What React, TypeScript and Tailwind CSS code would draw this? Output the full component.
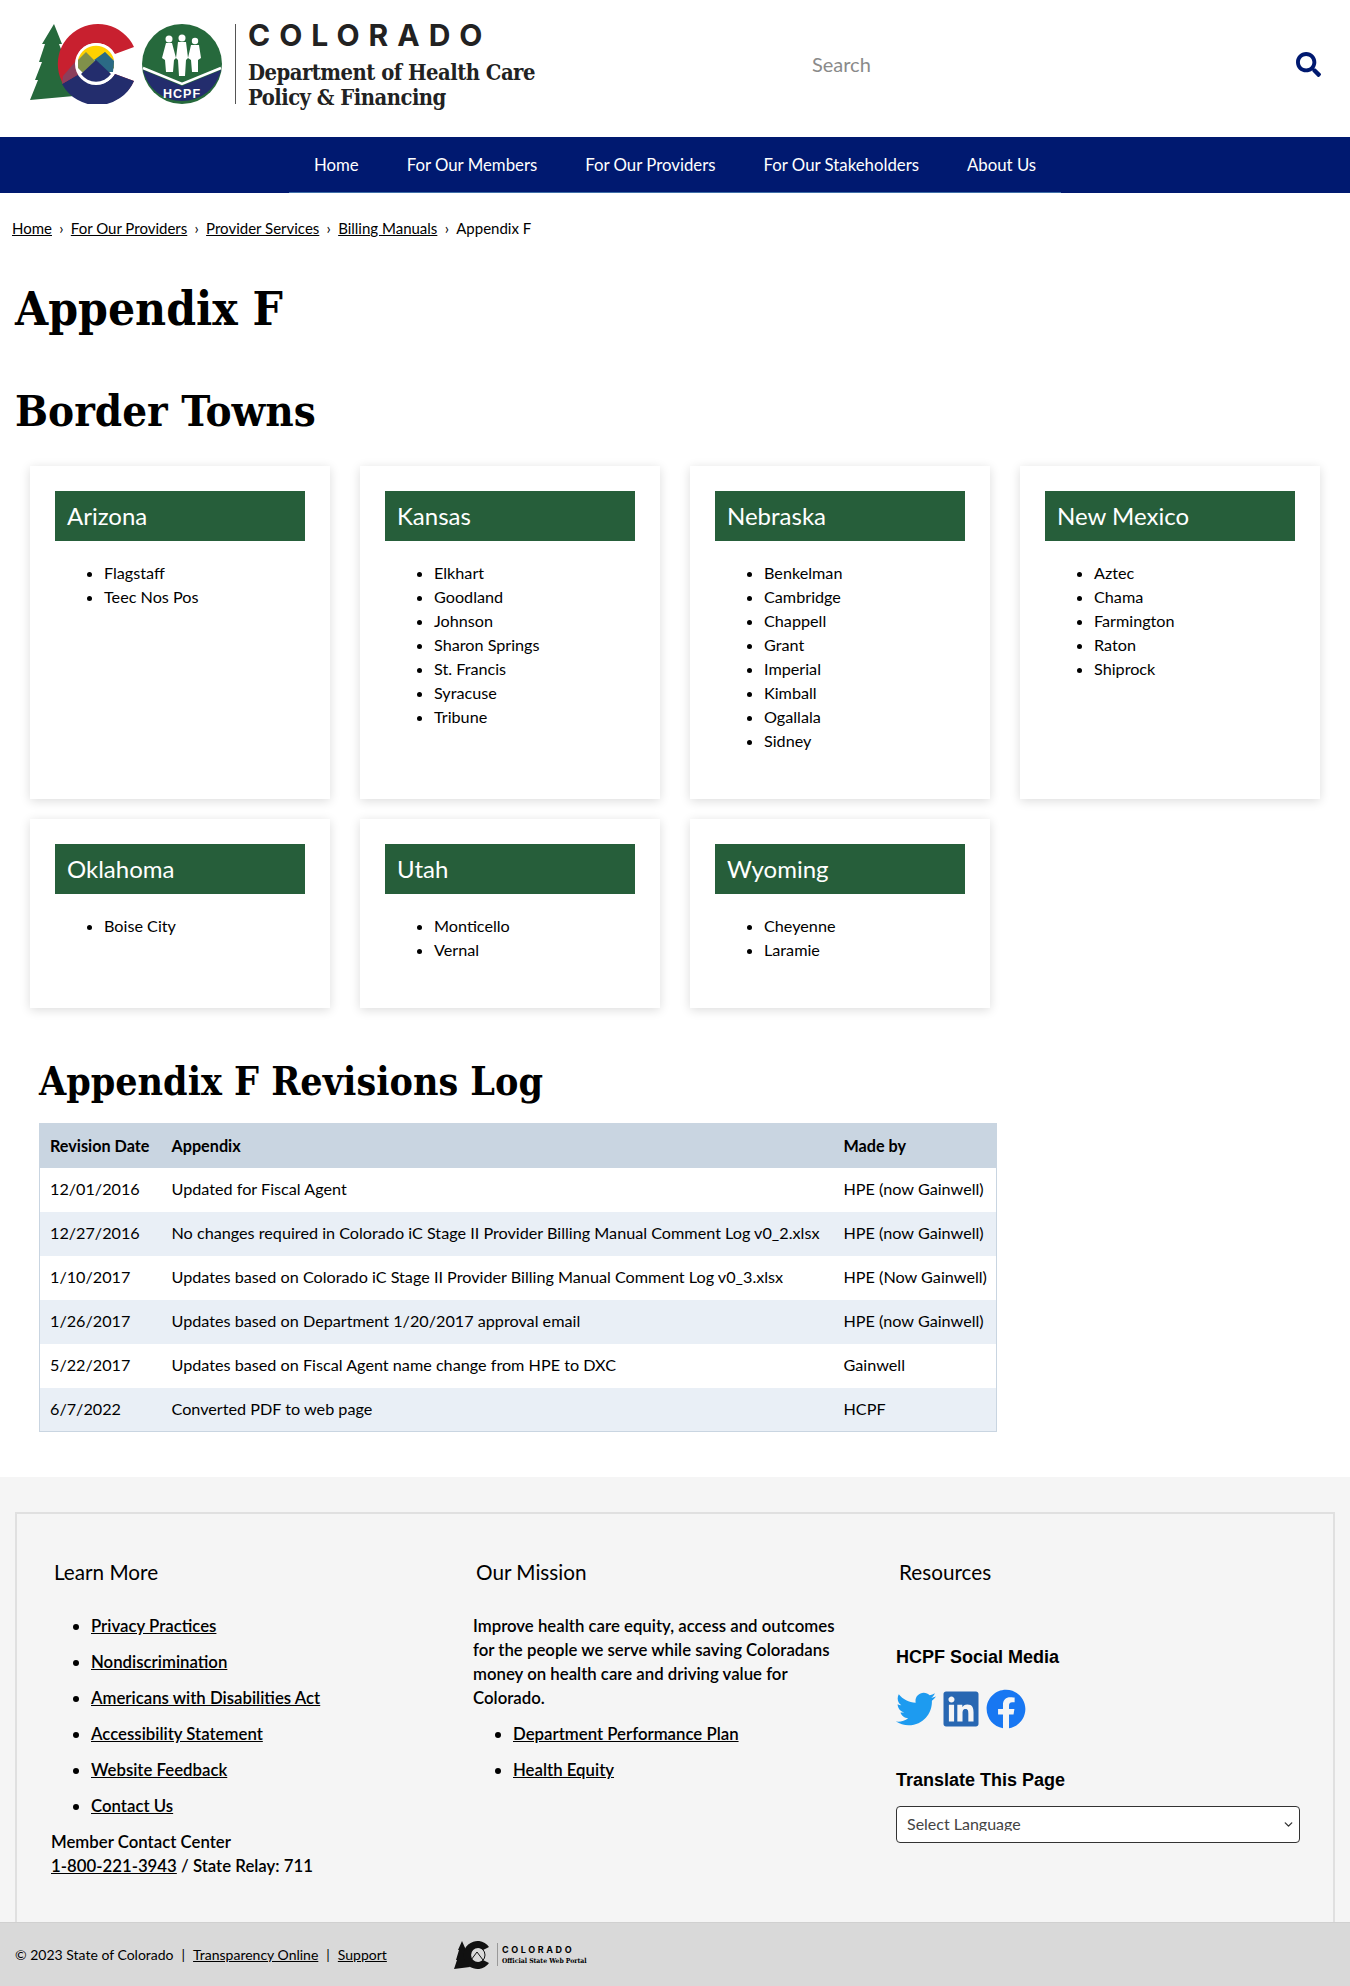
import { ChevronDown } from "lucide-react";
import { FaFacebook, FaLinkedin, FaSearch, FaTwitter } from "react-icons/fa";

const bodyFont = "font-['Lato',sans-serif]";
const slab = "font-['DejaVu_Serif',serif] [font-stretch:condensed]";

const states = [
  { name: "Arizona", towns: ["Flagstaff", "Teec Nos Pos"] },
  { name: "Kansas", towns: ["Elkhart", "Goodland", "Johnson", "Sharon Springs", "St. Francis", "Syracuse", "Tribune"] },
  { name: "Nebraska", towns: ["Benkelman", "Cambridge", "Chappell", "Grant", "Imperial", "Kimball", "Ogallala", "Sidney"] },
  { name: "New Mexico", towns: ["Aztec", "Chama", "Farmington", "Raton", "Shiprock"] },
  { name: "Oklahoma", towns: ["Boise City"] },
  { name: "Utah", towns: ["Monticello", "Vernal"] },
  { name: "Wyoming", towns: ["Cheyenne", "Laramie"] },
];

const revisions = [
  ["12/01/2016", "Updated for Fiscal Agent", "HPE (now Gainwell)"],
  ["12/27/2016", "No changes required in Colorado iC Stage II Provider Billing Manual Comment Log v0_2.xlsx", "HPE (now Gainwell)"],
  ["1/10/2017", "Updates based on Colorado iC Stage II Provider Billing Manual Comment Log v0_3.xlsx", "HPE (Now Gainwell)"],
  ["1/26/2017", "Updates based on Department 1/20/2017 approval email", "HPE (now Gainwell)"],
  ["5/22/2017", "Updates based on Fiscal Agent name change from HPE to DXC", "Gainwell"],
  ["6/7/2022", "Converted PDF to web page", "HCPF"],
];

function Logo() {
  return (
    <svg width="193" height="80" viewBox="0 0 193 80" className="shrink-0">
      {/* tree */}
      <path d="M24 0 L32 20 L29 20 L36 38 L32 38 L44 72 L0 76 L8 56 L5 56 L12 38 L9 38 L15 20 L12 20 Z" fill="#26693c" />
      {/* C */}
      <path d="M104 23 A40 40 0 1 0 104 57 L85 50 A21 21 0 1 1 85 30 Z" fill="#c8202f" />
      <path d="M104 57 A40 40 0 0 1 32 60 L49 50 A21 21 0 0 0 85 50 Z" fill="#232d6d" />
      <path d="M32 60 L49 50 L45 38 L33 52 Z" fill="#8b3f5c" />
      <circle cx="66" cy="40" r="21" fill="#fff" />
      <path d="M48 36 A18.5 18.5 0 0 1 84 36 Z" fill="#ffd100" />
      <path d="M48 44 L48 36 L56 28 L65 37 L75 28 L84 37 L84 44 L78 50 L54 50 Z" fill="#80904a" />
      <path d="M64 36 L75 28 L84 37 L83 48 L76 48 Z" fill="#2b6a85" />
      <path d="M51 50 L66 36 L81 50 A18.5 18.5 0 0 1 51 50 Z" fill="#232d6d" />
      {/* HCPF seal */}
      <circle cx="152" cy="40" r="40" fill="#26693c" />
      <path d="M113 46 L152 62 L191 46 A40 40 0 0 1 113 46 Z" fill="#232d6d" />
      <path d="M113 44 L152 60 L191 44" fill="none" stroke="#fff" strokeWidth="2.5" />
      <g fill="#fff">
        <circle cx="139" cy="15" r="3.5" />
        <path d="M136 19 L142 19 L146 34 L144 36 L143 48 L136 48 L135 36 L132 34 Z" />
        <circle cx="152" cy="14" r="3.5" />
        <path d="M148 18 L156 18 L158 34 L156 36 L155 52 L149 52 L148 36 L146 34 Z" />
        <circle cx="165" cy="17" r="3.2" />
        <path d="M161 21 L169 21 L171 34 L168 36 L168 48 L162 48 L161 36 L158 34 Z" />
      </g>
      <text x="152" y="74" textAnchor="middle" fill="#fff" fontSize="12.5" fontWeight="700" letterSpacing="1" fontFamily="Liberation Sans, sans-serif">HCPF</text>
    </svg>
  );
}

function SmallPortalLogo() {
  return (
    <svg width="36" height="30" viewBox="0 0 36 30" className="shrink-0">
      <path d="M8 1 L12 10 L11 10 L14 18 L13 18 L16 27 L0 29 L3 20 L2 20 L5 10 L4 10 Z" fill="#111" />
      <path d="M35 7 A14 14 0 1 0 35 23 L29 20 A7 7 0 1 1 29 10 Z" fill="#111" />
      <circle cx="23" cy="15" r="8" fill="none" stroke="#111" strokeWidth="1" />
      <path d="M17 20 L23 12 L29 20" fill="none" stroke="#111" strokeWidth="1" />
    </svg>
  );
}

function StateCard({ name, towns }: { name: string; towns: string[] }) {
  return (
    <div className="px-[15px]">
      <div className="h-full bg-white px-[25px] pb-[46px] pt-[25px] shadow-[0_2px_10px_rgba(0,0,0,0.14)]">
        <h3 className="bg-[#265e3a] px-3 text-[24px] leading-[50px] text-white">{name}</h3>
        <ul className="mt-5 list-disc pl-[49px] text-[16.2px] leading-[24px] text-black">
          {towns.map((t) => (
            <li key={t}>{t}</li>
          ))}
        </ul>
      </div>
    </div>
  );
}

export default function App() {
  return (
    <div className={`${bodyFont} bg-white text-black`}>
      <header className="flex h-[137px] items-center pb-[9px] pl-[30px] pr-[29px]">
        <Logo />
        <div className="ml-[12px] flex h-[80px] flex-col border-l border-[#555] pl-[12px] text-[#222]">
          <div className="font-['Inter',sans-serif] text-[30px] font-bold leading-[22px] tracking-[9px]">COLORADO</div>
          <div className={`${slab} mt-[14px] text-[21.8px] font-bold leading-[25px] tracking-[-0.5px]`}>
            Department of Health Care
            <br />
            Policy &amp; Financing
          </div>
        </div>
        <div className="ml-[277px] flex-1 text-[20px] text-[#8a8a8a]">Search</div>
        <FaSearch className="text-[#001970]" size={25} />
      </header>

      <nav className="flex h-[56px] justify-center bg-[#001970]">
        <ul className="flex h-full gap-[48px] border-b border-[#3f6fa8] px-[25px] text-[16.8px] leading-[55px] text-white">
          <li>Home</li>
          <li>For Our Members</li>
          <li>For Our Providers</li>
          <li>For Our Stakeholders</li>
          <li>About Us</li>
        </ul>
      </nav>

      <div className="flex items-center gap-[7.3px] px-3 pt-[25px] text-[15px] leading-[20px]">
        <a className="underline">Home</a>
        <span>›</span>
        <a className="underline">For Our Providers</a>
        <span>›</span>
        <a className="underline">Provider Services</a>
        <span>›</span>
        <a className="underline">Billing Manuals</a>
        <span>›</span>
        <span>Appendix F</span>
      </div>

      <main className="px-[15px]">
        <h1 className={`${slab} mt-[42px] text-[47.5px] font-bold leading-[56px]`}>Appendix F</h1>
        <h2 className={`${slab} mt-[47px] text-[43.5px] font-bold leading-[56px]`}>Border Towns</h2>

        <div className="mt-[27px] grid grid-cols-4 gap-y-[20px]">
          {states.map((s) => (
            <StateCard key={s.name} name={s.name} towns={s.towns} />
          ))}
        </div>

        <h2 className={`${slab} ml-[24px] mt-[48px] text-[39px] font-bold leading-[50px]`}>Appendix F Revisions Log</h2>

        <table className="ml-[24px] mt-[17px] w-[958px] table-fixed border border-[#c9d5e1] text-[16.2px]">
          <thead>
            <tr className="h-[44px] bg-[#c9d5e1] text-left">
              <th className="w-[132px] pl-[10px] font-bold">Revision Date</th>
              <th className="font-bold">Appendix</th>
              <th className="w-[153px] font-bold">Made by</th>
            </tr>
          </thead>
          <tbody>
            {revisions.map((r, i) => (
              <tr key={r[0]} className={`h-[44px] ${i % 2 ? "bg-[#e9eff6]" : "bg-white"}`}>
                <td className="pl-[10px]">{r[0]}</td>
                <td>{r[1]}</td>
                <td className="whitespace-nowrap">{r[2]}</td>
              </tr>
            ))}
          </tbody>
        </table>
      </main>

      <footer className="mt-[45px] bg-[#f5f5f5] pt-[35px]">
        <div className="mx-[15px] h-[410px] border-2 border-b-0 border-[#e0e0e0] pl-[34px] pt-[43px]">
          <div className="grid grid-cols-[422px_423px_404px] text-[16.8px] font-semibold leading-[24px]">
            <div>
              <h4 className="pl-[3px] text-[20.7px] font-normal leading-[30px]">Learn More</h4>
              <ul className="mt-[27px] list-disc space-y-[12px] pl-[40px]">
                <li><a className="underline">Privacy Practices</a></li>
                <li><a className="underline">Nondiscrimination</a></li>
                <li><a className="underline">Americans with Disabilities Act</a></li>
                <li><a className="underline">Accessibility Statement</a></li>
                <li><a className="underline">Website Feedback</a></li>
                <li><a className="underline">Contact Us</a></li>
              </ul>
              <p className="mt-[12px]">Member Contact Center</p>
              <p><a className="underline">1-800-221-3943</a> / State Relay: 711</p>
            </div>
            <div>
              <h4 className="pl-[3px] text-[20.7px] font-normal leading-[30px]">Our Mission</h4>
              <p className="mt-[27px] w-[385px]">
                Improve health care equity, access and outcomes for the people we serve while saving Coloradans money on health care and driving value for Colorado.
              </p>
              <ul className="mt-[12px] list-disc space-y-[12px] pl-[40px]">
                <li><a className="underline">Department Performance Plan</a></li>
                <li><a className="underline">Health Equity</a></li>
              </ul>
            </div>
            <div>
              <h4 className="pl-[3px] text-[20.7px] font-normal leading-[30px]">Resources</h4>
              <h5 className="mt-[58px] font-['Liberation_Sans',sans-serif] text-[18px] font-bold leading-[24px]">HCPF Social Media</h5>
              <div className="mt-[20px] flex gap-[5px]">
                <FaTwitter size={40} color="#1d9bf0" />
                <FaLinkedin size={40} color="#2867b2" />
                <FaFacebook size={40} color="#1877f2" />
              </div>
              <h5 className="mt-[39px] font-['Liberation_Sans',sans-serif] text-[18px] font-bold leading-[24px]">Translate This Page</h5>
              <div className="relative mt-[14px] w-[404px]">
                <select className="block h-[37px] w-full appearance-none rounded-[4px] border border-[#333] bg-white pb-[11px] pl-[10px] pt-[5px] text-[16px] font-normal text-[#444]">
                  <option>Select Language</option>
                </select>
                <ChevronDown className="absolute right-[5px] top-[12px] text-[#333]" size={13} strokeWidth={2.5} />
              </div>
            </div>
          </div>
        </div>
        <div className="flex h-[64px] items-center border-t border-[#d0d0d0] bg-[#d9d9d9] pl-[15px] text-[14px] leading-[20px]">
          <div className="flex w-[439px] gap-[8px]">
            <span>© 2023 State of Colorado</span>
            <span>|</span>
            <a className="underline">Transparency Online</a>
            <span>|</span>
            <a className="underline">Support</a>
          </div>
          <SmallPortalLogo />
          <div className="ml-[7px] border-l border-[#999] pl-[4px]">
            <div className="font-['Inter',sans-serif] text-[9px] font-bold leading-[13px] tracking-[2.6px]">COLORADO</div>
            <div className={`${slab} text-[6.8px] font-bold leading-[10px]`}>Official State Web Portal</div>
          </div>
        </div>
      </footer>
    </div>
  );
}
